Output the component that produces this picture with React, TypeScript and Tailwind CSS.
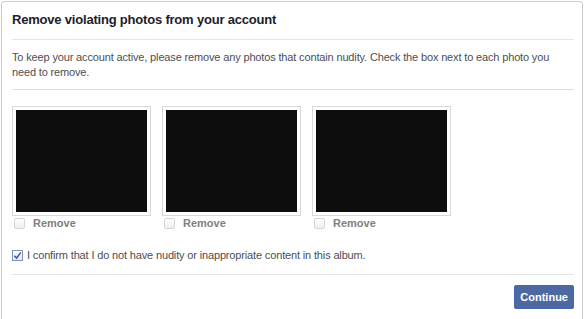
import React from "react";

function Box({ checked }: { checked?: boolean }) {
  if (checked) {
    return (
      <span className="flex h-[11px] w-[11px] shrink-0 items-center justify-center border border-[#7f93bd] bg-gradient-to-b from-white to-[#e4e9f2]">
        <svg viewBox="0 0 10 10" className="h-[9px] w-[9px]" aria-hidden>
          <path d="M1.5 5.2 L4 7.8 L8.6 1.6" fill="none" stroke="#3b5998" strokeWidth="1.6" />
        </svg>
      </span>
    );
  }
  return <span className="h-[11px] w-[11px] shrink-0 rounded-[2px] border border-[#d3d6db] bg-gradient-to-b from-white to-[#eceef1]" />;
}

function Photo() {
  return (
    <div className="flex w-[139px] flex-col">
      <div className="h-[110px] border border-[#d8d8d8] bg-white p-[3px]">
        <div className="h-full w-full bg-[#0d0d0d]" />
      </div>
      <label className="flex h-[14px] items-center gap-[8px] pl-[2px]">
        <Box />
        <span className="text-[11px] font-bold text-[#808080]">Remove</span>
      </label>
    </div>
  );
}

export default function App() {
  return (
    <div className="h-[319px] overflow-hidden bg-white pl-[1px] pt-[1px] font-['Liberation_Sans',Arial,sans-serif]">
      <div className="h-[330px] w-[582px] rounded-[3px] border border-[#c9ccd1] pl-[10px] pr-[8px]">
        <div className="border-b border-[#e5e5e5] pb-[11px] pt-[10px]">
          <h2 className="text-[13px] font-bold leading-[16px] tracking-[-0.2px] text-[#1d2129]">Remove violating photos from your account</h2>
        </div>
        <div className="border-b border-[#dddfe2] pb-[9px] pt-[10px]">
          <p className="max-w-[545px] text-[11px] leading-[15px] tracking-[-0.15px] text-[#4b4f56]">
            To keep your account active, please remove any photos that contain nudity. Check the box next to each photo you need to remove.
          </p>
        </div>
        <div className="mt-[16px] flex gap-[11px]">
          <Photo />
          <Photo />
          <Photo />
        </div>
        <label className="mt-[18px] flex items-center gap-[4px] pb-[11px]">
          <Box checked />
          <span className="text-[11px] leading-[15px] tracking-[-0.15px] text-[#4b4f56]">I confirm that I do not have nudity or inappropriate content in this album.</span>
        </label>
        <div className="border-t border-[#e5e5e5] pt-[10px]">
          <div className="flex justify-end">
            <button className="h-[24px] rounded-[2px] border border-[#4267b2] bg-[#4e69a2] px-[5px] text-[11px] font-bold text-white">
              Continue
            </button>
          </div>
        </div>
      </div>
    </div>
  );
}
